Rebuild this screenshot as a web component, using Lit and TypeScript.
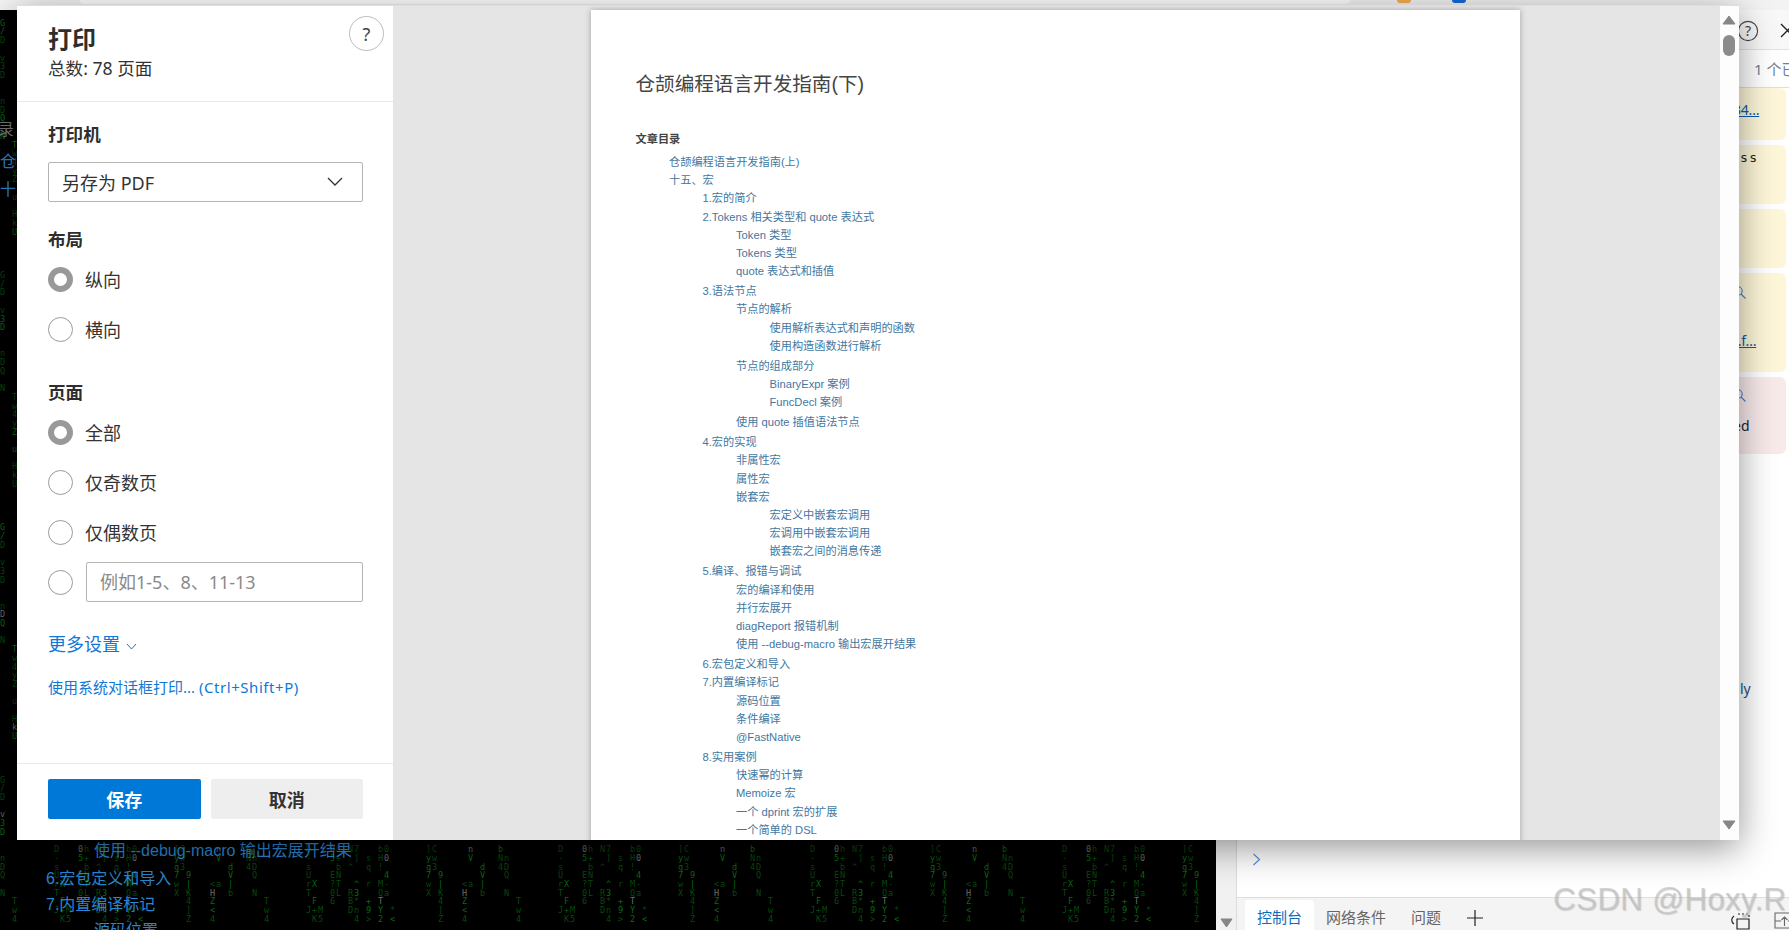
import { LitElement, html, css, nothing } from "lit";
import { customElement } from "lit/decorators.js";

type Node = { t: string; c?: Node[] };
const n = (t: string, c?: Node[]): Node => ({ t, c });

const TOC: Node[] = [
  n("仓颉编程语言开发指南(上)"),
  n("十五、宏", [
    n("1.宏的简介"),
    n("2.Tokens 相关类型和 quote 表达式", [n("Token 类型"), n("Tokens 类型"), n("quote 表达式和插值")]),
    n("3.语法节点", [
      n("节点的解析", [n("使用解析表达式和声明的函数"), n("使用构造函数进行解析")]),
      n("节点的组成部分", [n("BinaryExpr 案例"), n("FuncDecl 案例")]),
      n("使用 quote 插值语法节点"),
    ]),
    n("4.宏的实现", [
      n("非属性宏"),
      n("属性宏"),
      n("嵌套宏", [n("宏定义中嵌套宏调用"), n("宏调用中嵌套宏调用"), n("嵌套宏之间的消息传递")]),
    ]),
    n("5.编译、报错与调试", [
      n("宏的编译和使用"),
      n("并行宏展开"),
      n("diagReport 报错机制"),
      n("使用 --debug-macro 输出宏展开结果"),
    ]),
    n("6.宏包定义和导入"),
    n("7.内置编译标记", [n("源码位置"), n("条件编译"), n("@FastNative")]),
    n("8.实用案例", [n("快速幂的计算"), n("Memoize 宏"), n("一个 dprint 宏的扩展"), n("一个简单的 DSL")]),
  ]),
];

const GLYPHS = "ABCDEFGHJKLMNPQRSTUVWXYZabdhknqrsuvwy0123456789+-*<>/\\^?!|]";

function rng(seed: number) {
  let a = seed;
  return () => {
    a = (a + 0x6d2b79f5) | 0;
    let t = Math.imul(a ^ (a >>> 15), 1 | a);
    t = (t + Math.imul(t ^ (t >>> 7), 61 | t)) ^ t;
    return ((t ^ (t >>> 14)) >>> 0) / 4294967296;
  };
}

/** Cell tile of the falling-code wallpaper: 42 columns by 29 rows, repeated. */
function buildTile() {
  const r = rng(77);
  const tile: string[][] = [];
  for (let y = 0; y < 29; y++) tile.push(new Array(42).fill(""));
  for (let c = 0; c < 42; c++) {
    if (r() < 0.4) continue;
    const start = Math.floor(r() * 29);
    const len = 6 + Math.floor(r() * 12);
    for (let i = 0; i < len; i++) {
      if (r() < 0.2) continue;
      tile[(start + i) % 29][c] = GLYPHS[Math.floor(r() * GLYPHS.length)];
    }
  }
  return tile;
}

const TILE = buildTile();

function rainRows() {
  const rows: { y: number; cells: { x: number; ch: string; lit: number }[] }[] = [];
  for (let row = 0; row < 105; row++) {
    const y = row * 8.7;
    const maxCol = y >= 830 ? 203 : 3;
    const cells: { x: number; ch: string; lit: number }[] = [];
    for (let c = 0; c < maxCol; c++) {
      const ch = TILE[row % 29][c % 42];
      if (!ch) continue;
      const h = (row * 31 + (c % 42) * 17) % 23;
      cells.push({ x: c * 6, ch, lit: h === 0 ? 2 : h % 4 === 0 ? 1 : 0 });
    }
    if (cells.length) rows.push({ y, cells });
  }
  return rows;
}

@customElement("app-root")
export class AppRoot extends LitElement {
  static styles = css`
    :host {
      display: block;
      width: 1789px;
      height: 930px;
      font-family: "Noto Sans", "Noto Sans CJK SC", sans-serif;
      color: #333;
    }
    * { box-sizing: border-box; }
    .page {
      position: relative;
      width: 1789px;
      height: 930px;
      overflow: hidden;
      display: flex;
      flex-direction: column;
      background: #fff;
    }
    .topbar {
      height: 10px;
      flex: none;
      background: #f3f3f3;
      display: flex;
      align-items: flex-start;
    }
    .omni {
      margin-left: 80px;
      width: 1270px;
      height: 4px;
      background: #fff;
      border-radius: 0 0 14px 14px;
    }
    .ext { width: 14px; height: 3px; border-radius: 0 0 7px 7px; }
    .ext.o { margin-left: 47px; background: #f6ae4f; }
    .ext.b { margin-left: 41px; background: #1769d8; }

    .main { flex: 1; display: flex; min-height: 0; }

    .article {
      position: relative;
      width: 1216px;
      flex: none;
      background: #000;
      overflow: hidden;
      font-family: "Liberation Sans", "Noto Sans CJK SC", sans-serif;
      font-size: 16px;
      line-height: 26px;
      color: #2c84cf;
      padding-top: 107px;
      white-space: nowrap;
    }
    .rain {
      position: absolute;
      inset: 0;
      font: 8.5px/9px "DejaVu Sans Mono", monospace;
      color: #064a0a;
    }
    .rain span { position: absolute; }
    .rain .l1 { color: #0a6a10; }
    .rain .l2 { color: #6a6a6a; }
    .a { position: relative; }
    .a.gray { color: #777; margin-left: -2px; }
    .a.m6 { margin-top: 6px; }
    .a.m2 { margin-top: 2px; }
    .a.far { margin-top: 635px; margin-left: 94px; }
    .a.l2 { margin-left: 46px; margin-top: 2px; }
    .a.l3 { margin-left: 94px; }
    .a.tight { margin-top: 0; }

    .pagebar {
      width: 21px;
      flex: none;
      background: #f1f1f1;
      border-right: 1px solid #dcdcdc;
      display: flex;
      flex-direction: column;
      justify-content: flex-end;
      align-items: center;
      padding-bottom: 0;
    }

    .devtools {
      flex: 1;
      min-width: 0;
      display: flex;
      flex-direction: column;
      background: #fff;
      overflow: hidden;
    }
    .dt-tool {
      height: 40px;
      flex: none;
      background: #f8f8f8;
      border-bottom: 1px solid #e2e2e2;
      display: flex;
      align-items: center;
      padding: 2px 0 0 500px;
      gap: 20px;
    }
    .dt-count {
      height: 38px;
      flex: none;
      border-bottom: 1px solid #cfe0f7;
      padding-left: 517px;
      font-size: 15px;
      line-height: 38px;
      color: #6f7f96;
      white-space: nowrap;
    }
    .cards { display: flex; flex-direction: column; gap: 5px; flex: none; }
    .card {
      margin-right: 3px;
      padding-left: 496px;
      border-radius: 0 6px 6px 0;
      background: #fdf6d8;
      font-size: 14px;
      line-height: 20px;
      color: #222;
      white-space: nowrap;
      overflow: hidden;
    }
    .card.c1 { height: 52px; padding-top: 12px; }
    .card.c2 { height: 59px; padding-top: 2px; padding-left: 503px; }
    .card.c3 { height: 59px; }
    .card.c4 { height: 99px; padding-top: 13px; }
    .card.c5 { height: 77px; padding-top: 12px; background: #f9eaea; }
    .card svg { display: block; }
    .link { color: #0b5cad; text-decoration: underline; letter-spacing: -0.3px; }
    .mono { font-family: "DejaVu Sans Mono", monospace; font-size: 13px; letter-spacing: 1.4px; }
    .c4 .link { display: block; margin-top: 32px; }
    .c5 .tail { display: block; margin-top: 14px; }
    .stray {
      margin-top: 225px;
      padding-left: 503px;
      font-size: 14px;
      line-height: 20px;
      color: #1a4f8a;
      flex: none;
    }
    .prompt { margin-top: auto; height: 76px; padding: 32px 0 0 15px; flex: none; }
    .prompt svg { display: block; }
    .tabs {
      height: 33px;
      flex: none;
      border-top: 1px solid #cfe0f7;
      background: #f4f4f4;
      display: flex;
      align-items: stretch;
      padding: 2px 0 0 8px;
      font-size: 15px;
      color: #666;
    }
    .tab { padding: 0 12px; line-height: 35px; white-space: nowrap; }
    .tab.on { background: #fff; color: #0f6cbd; border-radius: 3px 3px 0 0; }
    .tab.wide { padding-right: 13px; }
    .plus { margin: 9px 0 0 13px; }
    .tab-icons { margin-left: auto; display: flex; gap: 23px; padding-top: 12px; margin-right: -6px; }
    .tab-icons svg { display: block; }

    .watermark {
      position: absolute;
      left: 1553px;
      top: 881px;
      font: 31.5px/36px "Liberation Sans", sans-serif;
      color: rgba(190, 190, 190, 0.65);
      text-shadow: 1px 1px 1px rgba(120, 120, 120, 0.3);
      white-space: nowrap;
      letter-spacing: 0.2px;
    }

    /* print dialog */
    .dialog {
      position: absolute;
      left: 17px;
      top: 5px;
      width: 1722px;
      height: 835px;
      display: flex;
      background: #fff;
      border-top: 1px solid #dedede;
      box-shadow: 0 8px 34px rgba(0, 0, 0, 0.42);
    }
    .side {
      width: 376px;
      flex: none;
      display: flex;
      flex-direction: column;
      background: #fff;
      font-size: 18px;
      color: #333;
    }
    .head {
      height: 96px;
      flex: none;
      border-bottom: 1px solid #e9e9e9;
      padding: 18px 9px 0 31px;
      display: flex;
      justify-content: space-between;
      align-items: flex-start;
    }
    .title { font-size: 24px; line-height: 30px; font-weight: 700; color: #2e2e2e; }
    .sub { font-size: 17.6px; line-height: 30px; margin-top: -1px; }
    .help {
      width: 35px;
      height: 35px;
      margin-top: -8px;
      border: 1px solid #bdbdbd;
      border-radius: 50%;
      display: flex;
      align-items: center;
      justify-content: center;
      font-size: 18px;
      color: #444;
    }
    .body { flex: 1; padding: 0 30px 0 31px; min-height: 0; }
    .label { font-size: 17.6px; line-height: 30px; font-weight: 700; color: #2e2e2e; margin-top: 22px; }
    .label.first { margin-top: 17px; }
    .label.p { margin-top: 23px; }
    .select {
      height: 40px;
      margin-top: 13px;
      border: 1px solid #b4b4b4;
      border-radius: 2px;
      display: flex;
      align-items: center;
      justify-content: space-between;
      padding: 0 19px 1px 13px;
    }
    .row { height: 50px; display: flex; align-items: center; gap: 12px; }
    .radio {
      width: 25px;
      height: 25px;
      flex: none;
      border-radius: 50%;
      border: 1px solid #9a9a9a;
      background: #fff;
    }
    .radio.on { border: 6px solid #999; }
    .input {
      flex: 1;
      height: 40px;
      margin-left: 1px;
      border: 1px solid #b4b4b4;
      border-radius: 2px;
      padding-left: 13px;
      line-height: 38px;
      color: #8a8a8a;
    }
    .more {
      margin-top: 22px;
      line-height: 30px;
      color: #1078d6;
      display: flex;
      align-items: center;
      gap: 6px;
    }
    .more svg { margin-top: 5px; }
    .sys { margin-top: 13px; font-size: 15px; line-height: 30px; color: #1078d6; white-space: nowrap; }
    .sys span { letter-spacing: 0.55px; }
    .foot {
      height: 77px;
      flex: none;
      border-top: 1px solid #e9e9e9;
      padding: 15px 30px 0 31px;
      display: flex;
      gap: 10px;
    }
    .btn {
      height: 40px;
      flex: 1;
      border-radius: 2px;
      display: flex;
      align-items: center;
      justify-content: center;
      font-weight: 700;
      font-size: 18px;
      background: #eee;
      color: #333;
    }
    .btn.save { background: #0078d7; color: #fff; }

    .preview {
      flex: 1;
      min-width: 0;
      background: #e5e5e5;
      padding: 4px 0 0 198px;
      overflow: hidden;
    }
    .sheet {
      width: 929px;
      height: 840px;
      background: #fff;
      box-shadow: 0 0 6px rgba(0, 0, 0, 0.3);
      padding: 59px 0 0 44.5px;
      font-family: "Liberation Sans", "Noto Sans CJK SC", sans-serif;
      white-space: nowrap;
    }
    .doc-title { font-size: 19.6px; line-height: 30px; color: #444; }
    .doc-toc { margin-top: 31px; font-size: 11.2px; line-height: 18px; font-weight: 700; color: #444; }
    ul { list-style: none; margin: 0 0 1.8px; padding: 0 0 0 33.5px; }
    .doc-list { margin-top: 5px; }
    li { font-size: 11.2px; line-height: 18.2px; color: #42779f; }

    .vbar {
      width: 19px;
      flex: none;
      background: #fdfdfd;
      display: flex;
      flex-direction: column;
      align-items: center;
      padding: 9px 2px 10px 0;
    }
    .thumb { width: 12px; height: 21px; margin-top: 10px; border-radius: 6px; background: #8c8c8c; }
    .vbar .down { margin-top: auto; }
    .vbar svg { display: block; }
  `;

  private renderList(nodes: Node[], cls = ""): unknown {
    return html`<ul class=${cls}>
      ${nodes.map(
        (x) => html`<li>${x.t}${x.c ? this.renderList(x.c) : nothing}</li>`
      )}
    </ul>`;
  }

  private tri(up: boolean, cls = "") {
    return html`<svg class=${cls} width="14" height="10" viewBox="0 0 14 10">
      <path d=${up ? "M7 1 L13 9 H1 Z" : "M7 9 L13 1 H1 Z"} fill="#868686" stroke="#868686" stroke-linejoin="round" />
    </svg>`;
  }

  private lens() {
    return html`<svg width="13" height="13" viewBox="0 0 13 13">
      <circle cx="5" cy="5" r="4.2" fill="none" stroke="#3f7fd6" stroke-width="1.1" />
      <path d="M8 8 L12.5 12.5" stroke="#3f7fd6" stroke-width="1.1" />
    </svg>`;
  }

  render() {
    return html`
      <div class="page">
        <div class="topbar">
          <div class="omni"></div>
          <div class="ext o"></div>
          <div class="ext b"></div>
        </div>
        <div class="main">
          <div class="article">
            <div class="rain">
              ${rainRows().map((row) =>
                row.cells.map(
                  (c) => html`<span class=${"l" + c.lit} style="left:${c.x}px;top:${row.y}px">${c.ch}</span>`
                )
              )}
            </div>
            <div class="a gray">录</div>
            <div class="a m6">仓颉编程语言开发指南(上)</div>
            <div class="a m2">十五、宏</div>
            <div class="a far">使用 --debug-macro 输出宏展开结果</div>
            <div class="a l2">6.宏包定义和导入</div>
            <div class="a l2 tight">7.内置编译标记</div>
            <div class="a l3">源码位置</div>
          </div>
          <div class="pagebar">
            <svg width="13" height="10" viewBox="0 0 13 10" style="margin-bottom:2px">
              <path d="M6.5 9 L12 1 H1 Z" fill="#868686" stroke="#868686" stroke-linejoin="round" />
            </svg>
          </div>
          <div class="devtools">
            <div class="dt-tool">
              <svg width="22" height="22" viewBox="0 0 22 22" style="flex:none">
                <circle cx="11" cy="11" r="9.6" fill="none" stroke="#444" stroke-width="1.1" />
                <text x="11" y="16" text-anchor="middle" font-size="14" font-family="Noto Sans" fill="#444">?</text>
              </svg>
              <svg width="20" height="16" viewBox="0 0 20 16" style="flex:none">
                <path d="M2 1 L15 14 M15 1 L2 14" stroke="#222" stroke-width="1.4" fill="none" />
              </svg>
            </div>
            <div class="dt-count">1 个已隐藏</div>
            <div class="cards">
              <div class="card c1"><span class="link">34…</span></div>
              <div class="card c2"><span class="mono">ss</span></div>
              <div class="card c3"></div>
              <div class="card c4">
                ${this.lens()}
                <span class="link">t.f…</span>
              </div>
              <div class="card c5">
                ${this.lens()}
                <span class="tail">ed</span>
              </div>
            </div>
            <div class="stray">ly</div>
            <div class="prompt">
              <svg width="9" height="13" viewBox="0 0 9 13">
                <path d="M1.5 1 L7.5 6.5 L1.5 12" fill="none" stroke="#5b8fd9" stroke-width="1.2" />
              </svg>
            </div>
            <div class="tabs">
              <div class="tab on">控制台</div>
              <div class="tab wide">网络条件</div>
              <div class="tab">问题</div>
              <svg class="plus" width="18" height="18" viewBox="0 0 18 18">
                <path d="M9 1 V17 M1 9 H17" stroke="#222" stroke-width="1.2" fill="none" />
              </svg>
              <div class="tab-icons">
                <svg width="21" height="18" viewBox="0 0 21 18">
                  <path d="M4 4 C1 6 1 10 4 12" fill="none" stroke="#222" stroke-width="1.2" />
                  <path d="M7 7 H19 V17 H7 Z" fill="none" stroke="#222" stroke-width="1.2" />
                  <path d="M8 2 H19 V6" fill="none" stroke="#222" stroke-width="1.2" stroke-dasharray="2 2" />
                </svg>
                <svg width="21" height="18" viewBox="0 0 21 18">
                  <path d="M1 1 H20 V16 H1 Z M1 9 H7 M14 9 H20 M10.5 14 V5 M7.5 8 L10.5 5 L13.5 8" fill="none" stroke="#666" stroke-width="1.1" />
                </svg>
              </div>
            </div>
          </div>
        </div>

        <div class="watermark">CSDN @Hoxy.R</div>

        <div class="dialog">
          <div class="side">
            <div class="head">
              <div>
                <div class="title">打印</div>
                <div class="sub">总数: 78 页面</div>
              </div>
              <div class="help">?</div>
            </div>
            <div class="body">
              <div class="label first">打印机</div>
              <div class="select">
                <span>另存为 PDF</span>
                <svg width="16" height="9" viewBox="0 0 16 9">
                  <path d="M1 1 L8 8 L15 1" fill="none" stroke="#333" stroke-width="1.3" />
                </svg>
              </div>
              <div class="label">布局</div>
              <div class="row"><div class="radio on"></div>纵向</div>
              <div class="row"><div class="radio"></div>横向</div>
              <div class="label p">页面</div>
              <div class="row"><div class="radio on"></div>全部</div>
              <div class="row"><div class="radio"></div>仅奇数页</div>
              <div class="row"><div class="radio"></div>仅偶数页</div>
              <div class="row"><div class="radio"></div><div class="input">例如1-5、8、11-13</div></div>
              <div class="more">
                更多设置
                <svg width="11" height="7" viewBox="0 0 11 7">
                  <path d="M1 1 L5.5 6 L10 1" fill="none" stroke="#1078d6" stroke-width="1" />
                </svg>
              </div>
              <div class="sys">使用系统对话框打印... <span>(Ctrl+Shift+P)</span></div>
            </div>
            <div class="foot">
              <div class="btn save">保存</div>
              <div class="btn">取消</div>
            </div>
          </div>
          <div class="preview">
            <div class="sheet">
              <div class="doc-title">仓颉编程语言开发指南(下)</div>
              <div class="doc-toc">文章目录</div>
              ${this.renderList(TOC, "doc-list")}
            </div>
          </div>
          <div class="vbar">
            ${this.tri(true)}
            <div class="thumb"></div>
            ${this.tri(false, "down")}
          </div>
        </div>
      </div>
    `;
  }
}
